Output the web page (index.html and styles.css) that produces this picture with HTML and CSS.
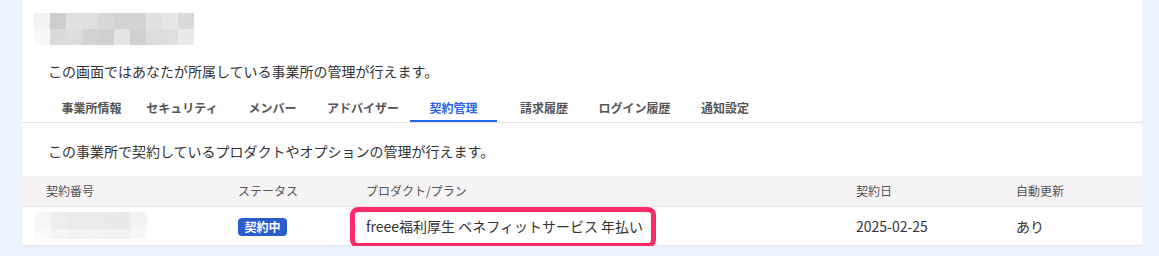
FILE: index.html
```html
<!DOCTYPE html>
<html lang="ja">
<head>
<meta charset="utf-8">
<title>事業所設定</title>
<link rel="stylesheet" href="styles.css">
</head>
<body>
<div class="card">
  <div class="mosaic title-mosaic">
    <div class="mrow">
      <i style="background:#f2f2f2"></i><i style="background:#cdcdcd"></i><i style="background:#e0e0e0"></i><i style="background:#e0e0e0"></i><i style="background:#d8d8d8"></i><i style="background:#d3d3d3"></i><i style="background:#d3d3d3"></i><i style="background:#e0e0e0"></i><i style="background:#e6e6e6"></i><i style="background:#dadada"></i>
    </div>
    <div class="mrow">
      <i style="background:#f8f8f8"></i><i style="background:#dadada"></i><i style="background:#dddddd"></i><i style="background:#d3d3d3"></i><i style="background:#d0d0d0"></i><i style="background:#e4e4e4"></i><i style="background:#d0d0d0"></i><i style="background:#dcdcdc"></i><i style="background:#dedede"></i><i style="background:#eaeaea"></i>
    </div>
  </div>

  <p class="lead">この画面ではあなたが所属している事業所の管理が行えます。</p>

  <nav class="tabs">
    <a class="tab">事業所情報</a>
    <a class="tab">セキュリティ</a>
    <a class="tab">メンバー</a>
    <a class="tab">アドバイザー</a>
    <a class="tab active">契約管理</a>
    <a class="tab">請求履歴</a>
    <a class="tab">ログイン履歴</a>
    <a class="tab">通知設定</a>
  </nav>

  <p class="lead sub">この事業所で契約しているプロダクトやオプションの管理が行えます。</p>

  <table class="contracts">
    <thead>
      <tr>
        <th class="c1">契約番号</th>
        <th class="c2">ステータス</th>
        <th class="c3">プロダクト/プラン</th>
        <th class="c4">契約日</th>
        <th class="c5">自動更新</th>
      </tr>
    </thead>
    <tbody>
      <tr>
        <td class="c1">
          <div class="mosaic num-mosaic">
            <div class="mrow r1">
              <i style="background:#f6f6f6"></i><i style="background:#eeeeee"></i><i style="background:#ebebeb"></i><i style="background:#ebebeb"></i><i style="background:#eaeaea"></i><i style="background:#e9e9e9"></i><i style="background:#f3f3f3"></i>
            </div>
            <div class="mrow r2">
              <i style="background:#f9f9f9"></i><i style="background:#f5f5f5"></i><i style="background:#f2f2f2"></i><i style="background:#f4f4f4"></i><i style="background:#f2f2f2"></i><i style="background:#f2f2f2"></i><i style="background:#f8f8f8"></i>
            </div>
          </div>
        </td>
        <td class="c2"><span class="badge">契約中</span></td>
        <td class="c3 product">freee福利厚生 ベネフィットサービス 年払い<span class="highlight"></span></td>
        <td class="c4">2025-02-25</td>
        <td class="c5">あり</td>
      </tr>
    </tbody>
  </table>
</div>
</body>
</html>
```

FILE: styles.css
```css
* { box-sizing: border-box; }

html, body {
  margin: 0;
  padding: 0;
  background: #ebf3fe;
  font-family: "Noto Sans CJK JP", "Noto Sans", sans-serif;
  color: #333;
}

.card {
  margin-left: 22px;
  width: 1120px;
  background: #fff;
  padding-top: 13px;
  border-bottom: 1px solid #e4e4e6;
}

.mosaic { display: flex; flex-direction: column; }
.mrow { display: flex; }
.mrow i { display: block; width: 16px; }

.title-mosaic { margin-left: 12px; width: 160px; }
.title-mosaic .mrow { height: 16px; }

.lead {
  margin: 16px 0 0 26px;
  font-size: 14px;
  line-height: 20px;
  color: #333;
}

.lead.sub { margin-top: 18px; }

.tabs {
  display: flex;
  gap: 3.5px;
  margin-top: 13px;
  padding-left: 26px;
  border-bottom: 1px solid #e3e3e3;
}

.tab {
  width: 87px;
  text-align: center;
  font-size: 12px;
  font-weight: 700;
  line-height: 16px;
  padding: 6px 0 4px;
  color: #555;
  border-bottom: 2px solid transparent;
}

.tab.active {
  color: #2864f0;
  border-bottom-color: #2864f0;
}

.contracts {
  margin-top: 15px;
  width: 1120px;
  border-collapse: collapse;
  table-layout: fixed;
}

.contracts th,
.contracts td {
  text-align: left;
  padding: 0 0 0 24px;
  vertical-align: middle;
}

.contracts th {
  height: 30px;
  background: #f5f3f4;
  font-size: 12px;
  font-weight: 400;
  color: #555;
  border-bottom: 1px solid #e6e2e6;
}

.contracts td {
  height: 39px;
  font-size: 14px;
  color: #333;
}

.c1 { width: 192px; }
.c2 { width: 128px; }
.c3 { width: 490px; }
.c4 { width: 160px; }
.c5 { width: 150px; }

.contracts td.c1 { padding-left: 13px; }

.num-mosaic { width: 112px; }
.num-mosaic .r1 { height: 17px; }
.num-mosaic .r2 { height: 10px; }

.badge {
  display: inline-block;
  width: 49px;
  height: 18px;
  line-height: 18px;
  text-align: center;
  background: #2a5ccc;
  color: #fff;
  font-size: 12px;
  font-weight: 700;
  border-radius: 4px;
}

.product { position: relative; }

.highlight {
  position: absolute;
  left: 8px;
  top: 0;
  width: 306px;
  height: 41px;
  border: 5px solid #ff2b69;
  border-radius: 8px;
}
```
